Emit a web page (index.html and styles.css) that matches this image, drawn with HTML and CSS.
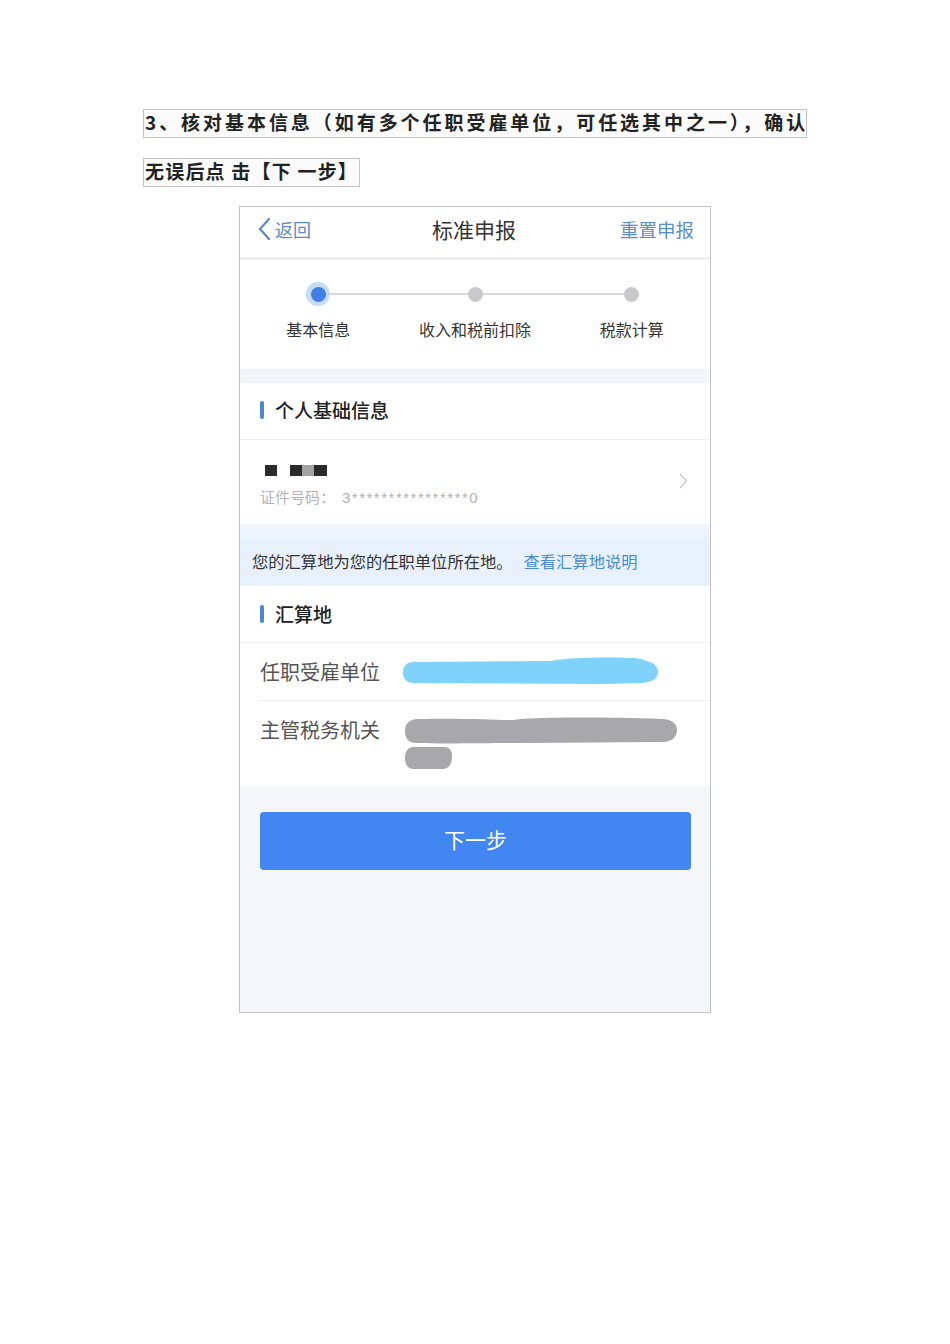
FILE: index.html
```html
<!DOCTYPE html>
<html lang="zh-CN">
<head>
<meta charset="utf-8">
<title>标准申报</title>
<link rel="stylesheet" href="styles.css">
</head>
<body>
<div class="doc">
  <div class="doc-line doc-line-1">3、核对基本信息（如有多个任职受雇单位，可任选其中之一），确认</div>
  <div class="doc-line doc-line-2">无误后点 击【下 一步】</div>

  <div class="phone">
    <header class="nav">
      <div class="nav-back">
        <svg class="back-ico" width="12" height="22" viewBox="0 0 12 22"><path d="M11 1 L2 11 L11 21" fill="none" stroke="#5b8ac4" stroke-width="2.2" stroke-linecap="round" stroke-linejoin="round"/></svg>
        <span>返回</span>
      </div>
      <div class="nav-title">标准申报</div>
      <div class="nav-reset">重置申报</div>
    </header>

    <section class="stepper">
      <div class="step">
        <div class="dot-row"><span class="seg seg-none"></span><span class="dot dot-active"><span class="dot-core"></span></span><span class="seg"></span></div>
        <div class="step-label">基本信息</div>
      </div>
      <div class="step">
        <div class="dot-row"><span class="seg"></span><span class="dot"></span><span class="seg"></span></div>
        <div class="step-label">收入和税前扣除</div>
      </div>
      <div class="step">
        <div class="dot-row"><span class="seg"></span><span class="dot"></span><span class="seg seg-none"></span></div>
        <div class="step-label">税款计算</div>
      </div>
    </section>

    <div class="band"></div>

    <div class="sec-head"><span class="sec-bar"></span><span class="sec-title">个人基础信息</span></div>

    <div class="person">
      <div class="person-info">
        <div class="name">
          <span class="blk blk-a"></span>
          <span class="blk blk-b"></span><span class="blk blk-gray"></span><span class="blk blk-c"></span>
        </div>
        <div class="idno">证件号码：<span class="idnum">3****************0</span></div>
      </div>
      <svg class="chev" width="9" height="16" viewBox="0 0 9 16"><path d="M1.5 1.5 L7.5 8 L1.5 14.5" fill="none" stroke="#c9c9c9" stroke-width="1.4" stroke-linecap="round" stroke-linejoin="round"/></svg>
    </div>

    <div class="notice">您的汇算地为您的任职单位所在地。<span class="notice-link">查看汇算地说明</span></div>

    <div class="sec-head sec-head-2"><span class="sec-bar"></span><span class="sec-title">汇算地</span></div>

    <div class="field field-1">
      <span class="field-label">任职受雇单位</span>
      <svg class="scrib-blue" width="258" height="28" viewBox="0 0 258 28"><path d="M12 5 L150 4 C162 0 228 -0.5 240 2 L244 4 C251 5 256 9 256 15 C256 22 250 25 240 26 L200 27 L12 26 C4 26 1 21 1 15.5 C1 10 4 5 12 5 Z" fill="#7fd3fb"/></svg>
    </div>
    <div class="field field-2">
      <span class="field-label">主管税务机关</span>
      <svg class="scrib-gray" width="276" height="55" viewBox="0 0 276 55"><path d="M14 3 C60 2 90 4 110 4 C130 1 200 1 258 3 C268 3 273 8 273 14 C273 21 268 26 258 26 L120 27 C90 27 40 28 12 27 C4 27 1 22 1 15 C1 8 5 3 14 3 Z" fill="#a8a8aa"/><path d="M10 31 L40 31 C46 31 48 35 48 40 C48 48 45 53 38 53 L10 53 C4 53 1 49 1 42 C1 35 4 31 10 31 Z" fill="#a8a8aa"/></svg>
    </div>

    <div class="bottom">
      <button class="next-btn" type="button">下一步</button>
    </div>
  </div>
</div>
</body>
</html>
```

FILE: styles.css
```css
* { box-sizing: border-box; }

html, body {
  margin: 0;
  padding: 0;
  background: #ffffff;
}

body {
  font-family: "Noto Sans CJK SC", "Noto Sans", sans-serif;
  color: #333;
}

.doc {
  padding: 109px 0 0 143px;
  display: flex;
  flex-direction: column;
  align-items: flex-start;
}

.doc-line {
  height: 29px;
  line-height: 24px;
  border: 1px solid #c4c4c4;
  background: #fbfbfb;
  font-family: "Noto Sans CJK SC", sans-serif;
  font-weight: 700;
  font-size: 19px;
  color: #222;
  padding: 0 0 0 1px;
  white-space: pre;
}

.doc-line-1 { letter-spacing: 2.95px; width: 664px; }
.doc-line-2 { letter-spacing: 1.2px; margin-top: 20px; width: 217px; }

.phone {
  margin-top: 19px;
  margin-left: 96px;
  width: 472px;
  height: 807px;
  border: 1px solid #c3c3c3;
  background: #f4f6f9;
  display: flex;
  flex-direction: column;
  overflow: hidden;
}

/* nav */
.nav {
  height: 53px;
  background: #fff;
  border-bottom: 3px solid #eff0f2;
  display: grid;
  grid-template-columns: 1fr auto 1fr;
  align-items: center;
  padding: 0 16px 7px 18px;
}

.nav-back {
  display: flex;
  align-items: center;
  gap: 5px;
  color: #5b8ac4;
  font-size: 18px;
}

.back-ico { display: block; }

.nav-title {
  font-size: 21px;
  color: #333;
  margin-left: -4px;
}

.nav-reset {
  justify-self: end;
  font-size: 18.5px;
  color: #5a8dcb;
}

/* stepper */
.stepper {
  height: 109px;
  background: #fff;
  display: grid;
  grid-template-columns: repeat(3, 1fr);
}

.step {
  display: flex;
  flex-direction: column;
  align-items: stretch;
  padding-top: 23px;
}

.dot-row {
  height: 22px;
  display: flex;
  align-items: center;
}

.seg {
  flex: 1;
  height: 2px;
  background: #d9d9d9;
}

.seg-none { background: transparent; }

.dot {
  width: 15px;
  height: 15px;
  border-radius: 50%;
  background: #c9c9cb;
  flex: none;
}

.dot-active {
  width: 24px;
  height: 24px;
  background: #c5dcf8;
  display: flex;
  align-items: center;
  justify-content: center;
}

.dot-core {
  width: 15px;
  height: 15px;
  border-radius: 50%;
  background: #3f7fe6;
}

.step-label {
  margin-top: 13px;
  text-align: center;
  font-size: 16px;
  line-height: 22px;
  color: #333;
}

.band {
  height: 14px;
  background: #f2f5f9;
}

/* section heads */
.sec-head {
  height: 57px;
  background: #fff;
  border-bottom: 1px solid #eeeeee;
  display: flex;
  align-items: center;
  padding-left: 20px;
  padding-bottom: 3px;
  gap: 11px;
}

.sec-head-2 { padding-bottom: 1px; }

.sec-bar {
  width: 4px;
  height: 18px;
  border-radius: 2px;
  background: #4a85d6;
}

.sec-title {
  font-size: 19px;
  color: #222;
  font-weight: 500;
}

/* person row */
.person {
  height: 84px;
  background: #fff;
  display: flex;
  align-items: center;
  justify-content: space-between;
  padding: 0 20px;
}

.person-info {
  display: flex;
  flex-direction: column;
  padding-top: 10px;
}

.name {
  display: flex;
  height: 11px;
  padding-left: 5px;
}

.blk {
  display: block;
  height: 11px;
  background: #2b2b2b;
}

.blk-a { width: 12px; margin-right: 13px; }
.blk-b { width: 12px; }
.blk-gray { width: 12px; background: #a3a3a3; }
.blk-c { width: 13px; }

.idno {
  margin-top: 10px;
  font-size: 15px;
  line-height: 22px;
  color: #b3b3b3;
}

.idnum {
  font-family: "Liberation Sans", sans-serif;
  font-size: 15px;
  letter-spacing: 1.5px;
  margin-left: 7px;
}

.chev { display: block; margin-right: 2px; margin-top: -3px; }

/* notice */
.notice {
  height: 62px;
  background: linear-gradient(#f1f6fc, #e8f1fb 30%);
  padding: 27px 12px 0;
  font-size: 16.3px;
  line-height: 20px;
  color: #333;
}

.notice-link {
  color: #4a8dd3;
  margin-left: 11px;
}

/* fields */
.field {
  background: #fff;
  display: flex;
  padding-left: 20px;
}

.field-label {
  font-size: 20px;
  line-height: 24px;
  color: #555;
  flex: none;
}

.field-1 {
  height: 58px;
  align-items: center;
  position: relative;
}

.field-1::after {
  content: "";
  position: absolute;
  left: 20px;
  right: 0;
  bottom: 0;
  height: 1px;
  background: #ededed;
}

.scrib-blue {
  display: block;
  margin-left: 22px;
  margin-top: -2px;
}

.field-2 {
  height: 85px;
  align-items: flex-start;
  padding-top: 17px;
}

.scrib-gray {
  display: block;
  margin-left: 24px;
  margin-top: -2px;
}

/* bottom */
.bottom {
  flex: 1;
  background: #f4f6f9;
  padding: 26px 19px 0 20px;
}

.next-btn {
  display: block;
  width: 100%;
  height: 58px;
  border: none;
  border-radius: 4px;
  background: #4286f1;
  color: #fff;
  font-family: "Noto Sans CJK SC", sans-serif;
  font-size: 21px;
  line-height: 54px;
  padding: 0 0 4px;
  cursor: pointer;
}
```
